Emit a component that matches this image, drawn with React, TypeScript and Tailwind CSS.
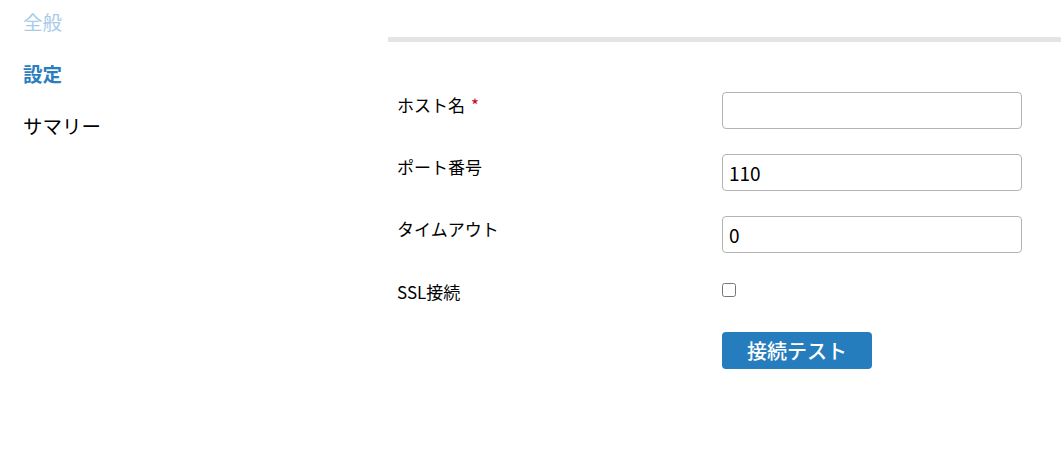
import React from 'react';

const font = { fontFamily: '"Noto Sans CJK JP", "Noto Sans", sans-serif' };

const NavItem: React.FC<{ label: string; tone: 'done' | 'active' | 'todo' }> = ({ label, tone }) => {
  const color =
    tone === 'done' ? 'text-[#a9cbe8]' : tone === 'active' ? 'text-[#2a7ebf] font-bold' : 'text-black';
  return <div className={`h-[52px] text-[19.5px] leading-[26px] ${color}`}>{label}</div>;
};

const TextRow: React.FC<{ label: string; required?: boolean; value?: string }> = ({ label, required, value }) => (
  <div className="flex items-start">
    <label className="w-[325px] pt-[1px] text-[17px] leading-[24px] text-black">
      {label}
      {required && <span className="ml-[6px] text-[#d0021b]">*</span>}
    </label>
    <input
      type="text"
      defaultValue={value}
      className="h-[37px] w-[300px] rounded-[4px] border border-[#b4b4b4] px-[6px] text-[19px] text-black outline-none"
    />
  </div>
);

export default function App() {
  return (
    <div className="flex min-h-[457px] w-full bg-white" style={font}>
      <aside className="w-[388px] shrink-0 pl-[23px] pt-[9px]">
        <NavItem label="全般" tone="done" />
        <NavItem label="設定" tone="active" />
        <NavItem label="サマリー" tone="todo" />
      </aside>

      <main className="flex-1">
        <div className="mt-[37px] h-[5px] bg-[#e4e4e4]" />

        <form className="flex flex-col gap-[25px] pl-[9px] pt-[50px]">
          <TextRow label="ホスト名" required />
          <TextRow label="ポート番号" value="110" />
          <TextRow label="タイムアウト" value="0" />

          <div className="flex items-start">
            <label className="w-[325px] pt-[2px] text-[17px] leading-[24px] text-black">SSL接続</label>
            <input type="checkbox" className="mt-[5px] h-[14px] w-[14px]" />
          </div>

          <div className="flex pt-[3px]">
            <div className="w-[325px]" />
            <button
              type="button"
              className="h-[37px] w-[150px] rounded-[4px] bg-[#267dbd] text-[20px] font-medium text-white"
            >
              接続テスト
            </button>
          </div>
        </form>
      </main>
    </div>
  );
}
